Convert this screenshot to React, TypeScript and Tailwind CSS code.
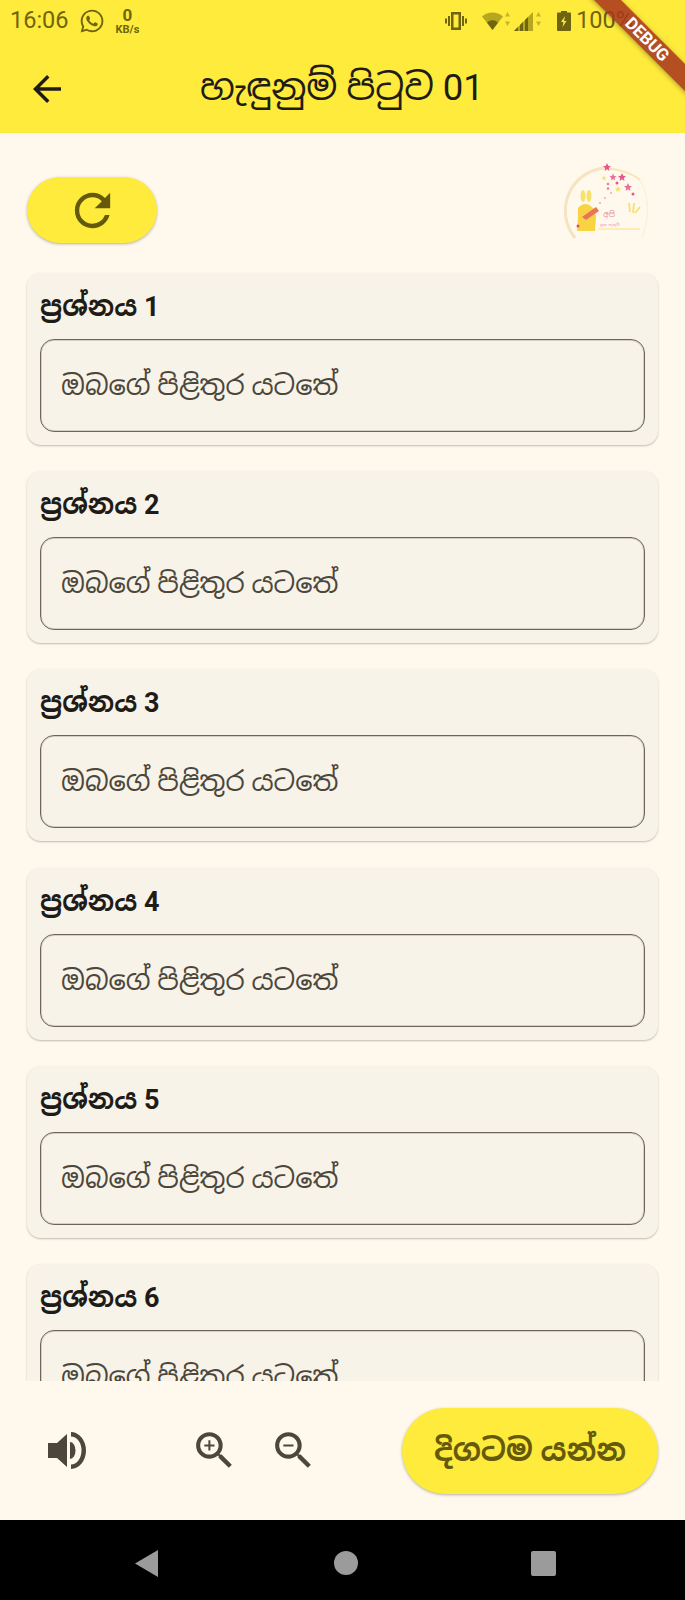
import React from 'react';
import { FaWhatsapp } from 'react-icons/fa';
import { MdArrowBack, MdRefresh, MdZoomIn, MdZoomOut } from 'react-icons/md';

const fontStack = { fontFamily: 'Roboto, "Noto Sans Sinhala", "Noto Sans", sans-serif' };

const StatusBar = () => (
  <div className="flex h-[42px] items-center pl-[10px] pr-[52px] text-[#6f6410]" style={{ fontFamily: 'Roboto, sans-serif' }}>
    <span className="text-[23.500px] leading-none">16:06</span>
    <FaWhatsapp className="ml-[10px] h-[26px] w-[26px]" />
    <div className="ml-[11px] flex flex-col items-center font-bold leading-none">
      <span className="text-[17px] leading-[17px]">0</span>
      <span className="text-[11px] leading-[11px]">KB/s</span>
    </div>
    <div className="ml-auto flex items-center">
      <svg viewBox="0 0 24 24" className="h-[24px] w-[24px]" fill="#6f6410">
        <path d="M7 3h10v18H7zM9.500 5.500v13h5v-13zM4 7h2v10H4zM18 7h2v10h-2zM1 9.500h2v5H1zM21 9.500h2v5h-2z" fillRule="evenodd" />
      </svg>
      <svg viewBox="0 0 28 20" className="ml-[14px] h-[20px] w-[28px]">
        <path d="M0 5.500a16 16 0 0 1 21 0L10.500 19z" fill="#b5a71e" />
        <path d="M5 11.500a8 8 0 0 1 11 0L10.500 19z" fill="#6f6410" />
        <path d="M25.500 1l2.500 4.500h-5zM25.500 15l-2.500-4.500h5z" fill="#c4b526" />
      </svg>
      <svg viewBox="0 0 28 20" className="ml-[4px] h-[20px] w-[28px]">
        <path d="M0 20L19 1v19z" fill="#b5a71e" />
        <path d="M0 20l4-4v4zM6 14l3-3v9H6zM11 9l3-3v14h-3z" fill="#6f6410" />
        <path d="M24.500 1l2.500 4.500h-5zM24.500 15l-2.500-4.500h5z" fill="#c4b526" />
      </svg>
      <svg viewBox="0 0 14 20" className="ml-[15px] h-[20px] w-[14px]">
        <path d="M4 0h6v1.500h3a1 1 0 0 1 1 1V19a1 1 0 0 1-1 1H1a1 1 0 0 1-1-1V2.500a1 1 0 0 1 1-1h3z" fill="#6f6410" />
        <path d="M8 5l-4 6h2.500l-1 5 4-6H7z" fill="#ffeb3b" />
      </svg>
      <span className="ml-[5px] text-[23.500px] leading-none">100%</span>
    </div>
  </div>
);

// the banner is see-through, the % shows under it
const DebugBanner = () => (
  <div className="absolute right-[-32px] top-[30px] flex h-[19px] w-[140px] rotate-45 items-center justify-center bg-[#a8341f]/85 shadow-[0_1px_5px_rgba(0,0,0,0.35)]">
    <span className="text-[17px] font-bold leading-none text-white" style={{ fontFamily: 'Roboto, sans-serif' }}>DEBUG</span>
  </div>
);

const star = (x: number, y: number, fill: string, r = 4) => (
  <polygon
    fill={fill}
    points={`${x},${y - r} ${x + r * 0.3},${y - r * 0.3} ${x + r},${y - r * 0.2} ${x + r * 0.45},${y + r * 0.25} ${x + r * 0.6},${y + r} ${x},${y + r * 0.55} ${x - r * 0.6},${y + r} ${x - r * 0.45},${y + r * 0.25} ${x - r},${y - r * 0.2} ${x - r * 0.3},${y - r * 0.3}`}
  />
);

// coordinates are page pixels, read off the reference
const Logo = () => (
  <svg viewBox="558 163 96 80" className="h-[80px] w-[96px]">
    <path d="M575 238A43 43 0 0 1 604 168" fill="none" stroke="#f6e3c0" strokeWidth="3" />
    <path d="M604 168Q628 170 640 180" fill="none" stroke="#f8e6b4" strokeWidth="2" />
    <path d="M640 180Q654 205 642 238" fill="none" stroke="#fcf0da" strokeWidth="1.500" />
    <ellipse cx="583" cy="196" rx="2.500" ry="6" fill="#f9e06a" />
    <ellipse cx="589" cy="196" rx="2.500" ry="6" fill="#f9e06a" />
    <path d="M578 208q7-8 15 0l3 8-1 15h-18l1-15z" fill="#f8d444" />
    <path d="M582 217l14-10 3 4-13 9z" fill="#e9745a" />
    <circle cx="578" cy="226" r="1.500" fill="#d94f6a" />
    {star(607, 167, '#e8558a')}
    {star(613, 177, '#ee6d98', 3.500)}
    {star(622, 177, '#e8558a')}
    {star(628, 187, '#ee6d98')}
    {star(604, 178, '#f9e06a', 2.500)}
    {star(618, 189, '#f9e06a', 3)}
    <circle cx="608" cy="184" r="1.300" fill="#ee7aa2" />
    <circle cx="608" cy="188.500" r="1.300" fill="#ee7aa2" />
    <circle cx="617" cy="183" r="1.500" fill="#e8558a" />
    <circle cx="633" cy="194" r="1.500" fill="#e8558a" />
    <circle cx="611" cy="193" r="1" fill="#f3a6bd" />
    <circle cx="605" cy="198" r="1" fill="#f3a6bd" />
    <circle cx="600" cy="203" r="1" fill="#f3a6bd" />
    <path d="M629 203l1 9M634 203l-1 10M640 207l-5 6" stroke="#f9e06a" strokeWidth="1.800" fill="none" />
    <path d="M598 229h42" stroke="#f9e27a" strokeWidth="1" />
    <text x="603" y="217" fontSize="8" fill="#e88aa5" style={fontStack}>අපි</text>
    <text x="600" y="226" fontSize="4" fill="#eba0b5" style={fontStack}>සුභ පැතුම්</text>
  </svg>
);

const QuestionCard = ({ n }: { n: number }) => (
  <div className="mb-[26.200px] h-[172px] shrink-0 rounded-[14px] bg-[#f8f3e8] px-[13px] pt-[13px] shadow-[0_1px_2px_rgba(0,0,0,0.25)]">
    <div className="h-[53px] text-[27px] font-bold leading-[43px] text-[#1f1c17]" style={fontStack}>ප්‍රශ්නය {n}</div>
    <div className="flex h-[93px] items-center rounded-[14px] border border-[#6b6658] pl-[20px] pt-[2px] text-[27.300px] text-[#4c473c] shadow-[inset_0_0_0_1px_rgba(107,102,88,0.25)]" style={fontStack}>
      ඔබගේ පිළිතුර යටතේ
    </div>
  </div>
);

export default function App() {
  return (
    <div className="flex h-[1600px] w-[685px] flex-col overflow-hidden bg-[#fff9ed]">
      <header className="relative h-[133px] shrink-0 overflow-hidden bg-[#ffeb3b]">
        <StatusBar />
        <div className="flex h-[91px] items-center pl-[26px] pt-[2px]">
          <MdArrowBack className="h-[42px] w-[42px] text-[#1f1c17]" />
          <h1 className="flex-1 pr-[69px] text-center text-[36.500px] font-normal text-[#1f1c17]" style={fontStack}>හැඳුනුම් පිටුව 01</h1>
        </div>
        <DebugBanner />
      </header>

      <main className="flex min-h-0 flex-1 flex-col overflow-hidden px-[27px]">
        <div className="flex h-[140px] shrink-0 items-start justify-between pt-[44px]">
          <button className="flex h-[66px] w-[130px] items-center justify-center rounded-full bg-[#ffeb3b] shadow-[0_1px_3px_rgba(0,0,0,0.3)]">
            <MdRefresh className="h-[53px] w-[53px] text-[#655a0c]" />
          </button>
          <div className="-mt-[14px] mr-[4px]"><Logo /></div>
        </div>
        {[1, 2, 3, 4, 5, 6].map((n) => <QuestionCard key={n} n={n} />)}
      </main>

      <div className="flex h-[139px] shrink-0 items-center pl-[48px] pr-[27px]">
        <svg viewBox="0 0 38 37" className="h-[37px] w-[38px]" fill="#4c473c">
          <path d="M0 11h9L19 2v33L9 26H0z" />
          <path d="M22 10A5.500 8.500 0 0 1 22 27z" />
          <path d="M23 0A15 18.500 0 0 1 23 37v-4.500A10.500 14 0 0 0 23 4.500z" />
        </svg>
        <MdZoomIn className="ml-[104px] h-[49px] w-[49px] text-[#4c473c]" />
        <MdZoomOut className="ml-[30px] h-[49px] w-[49px] text-[#4c473c]" />
        <button className="ml-auto flex h-[86px] w-[256px] items-center justify-center rounded-full bg-[#ffeb3b] text-[30.500px] font-bold text-[#655a0c] shadow-[0_1px_3px_rgba(0,0,0,0.3)]" style={fontStack}>
          දිගටම යන්න
        </button>
      </div>

      <nav className="flex h-[80px] shrink-0 items-center bg-black pl-[135px] pt-[6px]">
        <svg viewBox="0 0 23 27" className="h-[27px] w-[23px]" fill="#9b9b9b"><path d="M23 0v27L0 13.500z" /></svg>
        <div className="ml-[176px] h-[24px] w-[24px] rounded-full bg-[#9b9b9b]" />
        <div className="ml-[173px] h-[25px] w-[25px] rounded-[2px] bg-[#9b9b9b]" />
      </nav>
    </div>
  );
}
